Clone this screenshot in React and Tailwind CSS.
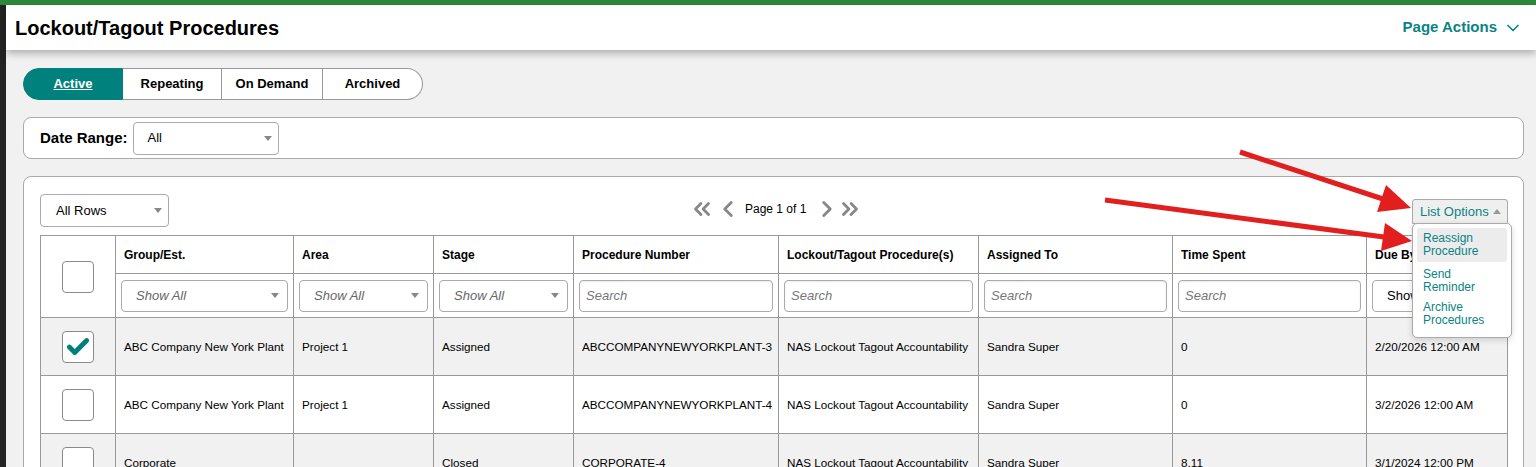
import React from 'react';
import { ChevronDown, ChevronsLeft, ChevronLeft, ChevronRight, ChevronsRight, Check } from 'lucide-react';

const FONT = { fontFamily: '"Liberation Sans", Arial, sans-serif' };

const columns = [
  { key: 'group', label: 'Group/Est.', width: 178, filter: 'select' },
  { key: 'area', label: 'Area', width: 140, filter: 'select' },
  { key: 'stage', label: 'Stage', width: 140, filter: 'select' },
  { key: 'number', label: 'Procedure Number', width: 205, filter: 'search' },
  { key: 'procedure', label: 'Lockout/Tagout Procedure(s)', width: 200, filter: 'search' },
  { key: 'assigned', label: 'Assigned To', width: 194, filter: 'search' },
  { key: 'time', label: 'Time Spent', width: 194, filter: 'search' },
  { key: 'due', label: 'Due By', width: 141, filter: 'plain' },
];

const rows = [
  {
    checked: true,
    group: 'ABC Company New York Plant',
    area: 'Project 1',
    stage: 'Assigned',
    number: 'ABCCOMPANYNEWYORKPLANT-3',
    procedure: 'NAS Lockout Tagout Accountability',
    assigned: 'Sandra Super',
    time: '0',
    due: '2/20/2026 12:00 AM',
  },
  {
    checked: false,
    group: 'ABC Company New York Plant',
    area: 'Project 1',
    stage: 'Assigned',
    number: 'ABCCOMPANYNEWYORKPLANT-4',
    procedure: 'NAS Lockout Tagout Accountability',
    assigned: 'Sandra Super',
    time: '0',
    due: '3/2/2026 12:00 AM',
  },
  {
    checked: false,
    group: 'Corporate',
    area: '',
    stage: 'Closed',
    number: 'CORPORATE-4',
    procedure: 'NAS Lockout Tagout Accountability',
    assigned: 'Sandra Super',
    time: '8.11',
    due: '3/1/2024 12:00 PM',
  },
];

const Caret = () => (
  <span className="w-0 h-0 border-l-[4px] border-r-[4px] border-t-[5px] border-l-transparent border-r-transparent border-t-[#888]" />
);

const Checkbox = ({ checked }) => (
  <div className="w-[32px] h-[32px] mx-auto rounded-[4px] border border-[#8a8a8a] bg-white flex items-center justify-center">
    {checked && <Check size={26} strokeWidth={4.5} className="text-[#00807a]" />}
  </div>
);

const Filter = ({ type }) => {
  if (type === 'select') {
    return (
      <div className="h-[32px] rounded-[4px] border border-[#aaa] bg-white flex items-center justify-between pl-[14px] pr-[8px]">
        <span className="italic text-[13px] text-[#666]">Show All</span>
        <Caret />
      </div>
    );
  }
  if (type === 'plain') {
    return (
      <div className="h-[32px] rounded-[4px] border border-[#aaa] bg-white flex items-center pl-[14px] pr-[8px]">
        <span className="text-[13px] text-black">Show All</span>
      </div>
    );
  }
  return (
    <div className="h-[32px] rounded-[4px] border border-[#aaa] bg-white flex items-center px-[6px] shadow-[inset_0_1px_2px_rgba(0,0,0,0.08)]">
      <span className="italic text-[13px] text-[#777]">Search</span>
    </div>
  );
};

const Arrows = () => (
  <svg className="absolute inset-0 pointer-events-none" width="1536" height="467" viewBox="0 0 1536 467">
    <g fill="#e21f1f" stroke="#e21f1f">
      <line x1="1240" y1="152" x2="1383" y2="199" strokeWidth="5" />
      <polygon points="1411,208 1377,212 1386,185" stroke="none" />
      <line x1="1105" y1="200" x2="1384" y2="237" strokeWidth="5" />
      <polygon points="1412,241 1381,251 1385,223" stroke="none" />
    </g>
  </svg>
);

export default function App() {
  return (
    <div className="relative w-[1536px] h-[467px] overflow-hidden bg-[#f1f1f1] flex flex-col" style={FONT}>
      <div className="h-[5px] bg-[#2e8a3a] shrink-0" />
      <div className="flex flex-1 min-h-0">
        <div className="w-[6px] bg-[#232323] shrink-0" />
        <div className="flex-1 flex flex-col min-w-0">
          {/* header */}
          <div className="h-[45px] bg-white flex items-center justify-between pl-[9px] pr-[13px] shadow-[0_3px_8px_rgba(0,0,0,0.3)] relative z-10 shrink-0">
            <h1 className="text-[20px] font-bold text-black">Lockout/Tagout Procedures</h1>
            <div className="flex items-center gap-[6px] text-[#0b8383]">
              <span className="text-[15px] font-bold">Page Actions</span>
              <ChevronDown size={20} strokeWidth={2} />
            </div>
          </div>

          <div className="flex flex-col pl-[17px] pr-[12px] pt-[18px]">
            {/* tabs */}
            <div className="flex h-[32px] text-[13px] font-bold">
              <div className="w-[100px] bg-[#00817d] text-white underline rounded-l-full flex items-center justify-center border border-[#00817d]">
                Active
              </div>
              <div className="w-[99px] bg-white border-y border-r border-[#999] flex items-center justify-center">Repeating</div>
              <div className="w-[101px] bg-white border-y border-r border-[#999] flex items-center justify-center">On Demand</div>
              <div className="w-[100px] bg-white border-y border-r border-[#999] rounded-r-full flex items-center justify-center">Archived</div>
            </div>

            {/* date range */}
            <div className="mt-[17px] h-[42px] bg-white border border-[#aaa] rounded-[8px] flex items-center pl-[16px] gap-[5px]">
              <span className="text-[15px] font-bold">Date Range:</span>
              <div className="w-[146px] h-[33px] border border-[#aaa] rounded-[4px] flex items-center justify-between pl-[14px] pr-[6px]">
                <span className="text-[13px]">All</span>
                <Caret />
              </div>
            </div>

            {/* list card */}
            <div className="mt-[17px] bg-white border border-[#aaa] rounded-t-[8px] px-[16px] pt-[17px] h-[400px]">
              <div className="flex items-center justify-between h-[33px] relative">
                <div className="w-[129px] h-[33px] border border-[#aaa] rounded-[4px] flex items-center justify-between pl-[15px] pr-[6px]">
                  <span className="text-[13px]">All Rows</span>
                  <Caret />
                </div>
                <div className="flex items-center text-[#888] absolute left-[649px] top-[2px]">
                  <ChevronsLeft size={26} strokeWidth={2.6} />
                  <ChevronLeft size={26} strokeWidth={2.6} />
                  <span className="text-[12px] text-black ml-[4px] mr-[8px]">Page 1 of 1</span>
                  <ChevronRight size={26} strokeWidth={2.6} />
                  <ChevronsRight size={26} strokeWidth={2.6} className="ml-[-3px]" />
                </div>
                <div className="relative self-end translate-y-[-3px] mr-[-1px]">
                  <div className="w-[96px] h-[25px] bg-[#efefef] border border-[#aaa] rounded-t-[3px] flex items-center justify-between pl-[7px] pr-[6px] text-[#0b8383] text-[13px] whitespace-nowrap">
                    <span>List Options</span>
                    <span className="w-0 h-0 border-l-[4px] border-r-[4px] border-b-[5px] border-l-transparent border-r-transparent border-b-[#999]" />
                  </div>
                  <div className="absolute left-0 top-[24px] w-[100px] bg-white border border-[#aaa] rounded-[5px] shadow-[0_2px_6px_rgba(0,0,0,0.15)] z-20 p-[4px] text-[12px] text-[#0b8383] leading-[13px] flex flex-col gap-[6px]">
                    <div className="bg-[#ececec] rounded-[3px] px-[6px] py-[4px]">Reassign<br />Procedure</div>
                    <div className="px-[6px]">Send<br />Reminder</div>
                    <div className="px-[6px] pb-[6px] pt-[1px]">Archive<br />Procedures</div>
                  </div>
                </div>
              </div>

              <table className="mt-[8px] table-fixed border-collapse w-[1467px] text-[11.7px] text-black">
                <colgroup>
                  <col style={{ width: 75 }} />
                  {columns.map((c) => (
                    <col key={c.key} style={{ width: c.width }} />
                  ))}
                </colgroup>
                <thead>
                  <tr className="h-[38px]">
                    <th rowSpan={2} className="border border-[#999] align-middle">
                      <Checkbox checked={false} />
                    </th>
                    {columns.map((c) => (
                      <th key={c.key} className="border border-[#999] text-left font-bold text-[12px] pl-[8px] whitespace-nowrap overflow-hidden">
                        {c.label}
                      </th>
                    ))}
                  </tr>
                  <tr className="h-[44px]">
                    {columns.map((c) => (
                      <th key={c.key} className="border border-[#999] px-[5px] font-normal text-left">
                        <Filter type={c.filter} />
                      </th>
                    ))}
                  </tr>
                </thead>
                <tbody>
                  {rows.map((r, i) => (
                    <tr key={i} className={(i % 2 === 0 ? 'bg-[#f1f1f1]' : 'bg-white') + ' h-[58px]'}>
                      <td className="border border-[#999]">
                        <Checkbox checked={r.checked} />
                      </td>
                      {columns.map((c) => (
                        <td key={c.key} className="border border-[#999] pl-[8px] whitespace-nowrap overflow-hidden">
                          {r[c.key]}
                        </td>
                      ))}
                    </tr>
                  ))}
                </tbody>
              </table>
            </div>
          </div>
        </div>
      </div>
      <Arrows />
    </div>
  );
}
